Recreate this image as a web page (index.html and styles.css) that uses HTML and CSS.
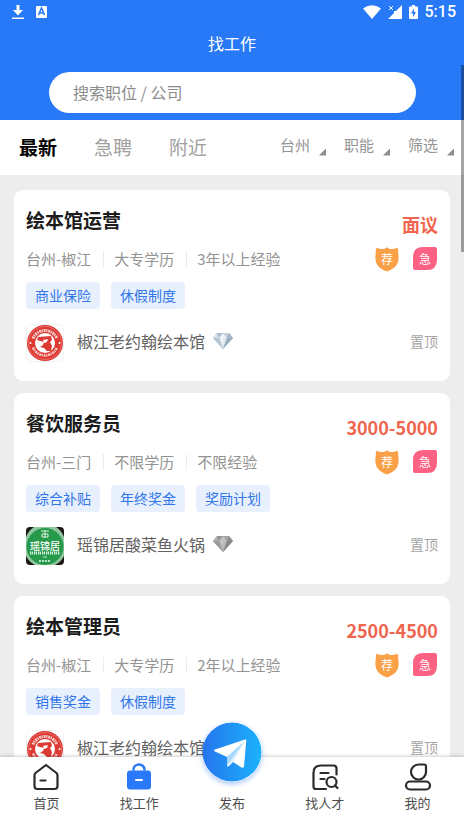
FILE: index.html
```html
<!DOCTYPE html>
<html lang="zh-CN">
<head>
  <meta charset="UTF-8">
  <meta name="viewport" content="width=device-width, initial-scale=1">
  <title>找工作</title>
  <link rel="stylesheet" href="styles.css">
</head>
<body>

<!-- shared icons -->
<svg class="sprite" aria-hidden="true">
  <symbol id="badge-rec" viewBox="0 0 26 26">
    <path d="M13 1c1 1.400 2.500 2 4.500 2 2 0 4-.4 5.500-1.500l1.500 2.500-.5 1c.4 2 .6 4 .6 7 0 7-4.600 11-11.600 13.500C6 23 1.400 19 1.400 12c0-3 .2-5 .6-7l-.5-1L3 1.500C4.500 2.600 6.500 3 8.500 3 10.500 3 12 2.400 13 1z" fill="#faa046"/>
  </symbol>
  <symbol id="badge-urgent" viewBox="0 0 26 26">
    <path d="M11 1h12q2 0 2 2v11q0 10-10 10H3q-2 0-2-2V11Q1 1 11 1z" fill="#fd6184"/>
  </symbol>
  <symbol id="diamond" viewBox="0 0 20 18">
    <path d="M4 1h12l4 5-10 11L0 6z" fill="#b9c8d6"/>
    <path d="M4 1l2 5H0z" fill="#d5dfe8"/>
    <path d="M4 1h6L6 6z" fill="#a9bccd"/>
    <path d="M10 1l4 5H6z" fill="#edf3f8"/>
    <path d="M10 1h6l-2 5z" fill="#c3d0dc"/>
    <path d="M16 1l4 5h-6z" fill="#a3b6c8"/>
    <path d="M0 6h6l4 11z" fill="#b3c3d2"/>
    <path d="M6 6h8l-4 11z" fill="#dce6ef"/>
    <path d="M14 6h6L10 17z" fill="#9aaec2"/>
    <path d="M8 6h2v7z" fill="#fff"/>
  </symbol>
  <symbol id="logo-book" viewBox="0 0 38 38">
    <rect x=".5" y=".5" width="37" height="37" rx="5" fill="#fff" stroke="#f1f1f1"/>
    <circle cx="19" cy="19" r="18" fill="#dd3a33"/>
    <circle cx="19" cy="19" r="16.500" fill="none" stroke="#f08a84" stroke-width=".6"/>
    <circle cx="19" cy="19" r="10" fill="#fff"/>
    <path d="M7 14.500a13 13 0 0 1 24 0" fill="none" stroke="#f8cfcc" stroke-width="3" stroke-dasharray="2 .6 1.200 .8"/>
    <path d="M7 23.500a13 13 0 0 0 24 0" fill="none" stroke="#f8cfcc" stroke-width="2.500" stroke-dasharray="2 .6 1.200 .8"/>
    <path d="M12 13l13-1 1 4-2 2 2 4-1 5h-4l-3-3-4-1 3-2 1-3-4-1-3-1z" fill="#dd3a33"/>
    <path d="M17 16l5-1-1 3-3 1z" fill="#fff"/>
    <circle cx="4.500" cy="19" r="1" fill="#fff"/>
    <circle cx="33.500" cy="19" r="1" fill="#fff"/>
  </symbol>
  <symbol id="logo-yao" viewBox="0 0 38 38">
    <rect width="38" height="38" rx="4" fill="#1c1712"/>
    <path d="M8 0h22a20 20 0 0 1 8 10v19a20 20 0 0 1-9 9H9a20 20 0 0 1-9-9V10a20 20 0 0 1 8-10z" fill="#8fc7a0"/>
    <circle cx="19" cy="19.500" r="18.500" fill="#27994b"/>
    <path d="M15 4h8M16 7h6v3h-6zM19 3v8" stroke="#d9f0df" fill="none"/>
    <path d="M4 26h30" stroke="#d9f0df" stroke-width="3" stroke-dasharray="1 .6 1.400 1"/>
    <path d="M17 30h4" stroke="#bfe3c9"/>
    <path d="M13 34h12" stroke="#bfe3c9" stroke-width="2" stroke-dasharray="2 1"/>
  </symbol>
</svg>

<div class="app">
  <header class="header">
    <div class="status">
      <svg width="12" height="16" viewBox="0 0 12 16" fill="#fff"><path d="M4.500 1h3v5H11l-5 5.500L1 6h3.500zM0 13.500h12V15H0z"/></svg>
      <svg class="status-app" width="11" height="12" viewBox="0 0 11 12"><rect width="11" height="12" rx="1" fill="#fff"/><path d="M2.500 9l3-7 3 7M3.500 7h4" fill="none" stroke="#2779f7" stroke-width="1.500"/></svg>
      <svg width="18" height="14" viewBox="0 0 18 14" fill="#fff"><path d="M0 3.500Q9-3 18 3.500L9 14z"/></svg>
      <svg width="14" height="14" viewBox="0 0 14 14"><path d="M14 0v14H0l6-6V6h2z" fill="#fff"/><path d="M1 1l4 4M5 1L1 5" stroke="#fff"/></svg>
      <svg width="9" height="14" viewBox="0 0 9 14"><path d="M3 0h3v1.500h2q1 0 1 1V13q0 1-1 1H1q-1 0-1-1V2.500q0-1 1-1h2z" fill="#fff"/><path d="M5 3.500L2 8.500h2v3.500l3-5H5z" fill="#2779f7"/></svg>
      <span class="clock">5:15</span>
    </div>
    <h1>找工作</h1>
    <form class="search">
      <input type="search" placeholder="搜索职位 / 公司" aria-label="搜索职位 / 公司">
    </form>
  </header>

  <div class="toolbar">
    <div class="tabs">
      <button type="button" class="tab active">最新</button>
      <button type="button" class="tab">急聘</button>
      <button type="button" class="tab">附近</button>
    </div>
    <div class="filters">
      <button type="button" class="filter">台州</button>
      <button type="button" class="filter">职能</button>
      <button type="button" class="filter">筛选</button>
    </div>
  </div>

  <main class="jobs">
    <article class="card">
      <div class="card-top">
        <h2>绘本馆运营</h2>
        <span class="salary">面议</span>
      </div>
      <div class="card-meta">
        <ul class="meta">
          <li>台州-椒江</li>
          <li>大专学历</li>
          <li>3年以上经验</li>
        </ul>
        <span class="badge"><svg><use href="#badge-rec"/></svg><span>荐</span></span>
        <span class="badge"><svg><use href="#badge-urgent"/></svg><span>急</span></span>
      </div>
      <div class="tags">
        <span class="tag">商业保险</span>
        <span class="tag">休假制度</span>
      </div>
      <div class="company">
        <span class="logo"><svg><use href="#logo-book"/></svg></span>
        <span>椒江老约翰绘本馆</span>
        <svg class="gem"><use href="#diamond"/></svg>
        <span class="pin">置顶</span>
      </div>
    </article>

    <article class="card">
      <div class="card-top">
        <h2>餐饮服务员</h2>
        <span class="salary">3000-5000</span>
      </div>
      <div class="card-meta">
        <ul class="meta">
          <li>台州-三门</li>
          <li>不限学历</li>
          <li>不限经验</li>
        </ul>
        <span class="badge"><svg><use href="#badge-rec"/></svg><span>荐</span></span>
        <span class="badge"><svg><use href="#badge-urgent"/></svg><span>急</span></span>
      </div>
      <div class="tags">
        <span class="tag">综合补贴</span>
        <span class="tag">年终奖金</span>
        <span class="tag">奖励计划</span>
      </div>
      <div class="company">
        <span class="logo"><svg><use href="#logo-yao"/></svg><span>瑶锦居</span></span>
        <span>瑶锦居酸菜鱼火锅</span>
        <svg class="gem gray"><use href="#diamond"/></svg>
        <span class="pin">置顶</span>
      </div>
    </article>

    <article class="card">
      <div class="card-top">
        <h2>绘本管理员</h2>
        <span class="salary">2500-4500</span>
      </div>
      <div class="card-meta">
        <ul class="meta">
          <li>台州-椒江</li>
          <li>大专学历</li>
          <li>2年以上经验</li>
        </ul>
        <span class="badge"><svg><use href="#badge-rec"/></svg><span>荐</span></span>
        <span class="badge"><svg><use href="#badge-urgent"/></svg><span>急</span></span>
      </div>
      <div class="tags">
        <span class="tag">销售奖金</span>
        <span class="tag">休假制度</span>
      </div>
      <div class="company">
        <span class="logo"><svg><use href="#logo-book"/></svg></span>
        <span>椒江老约翰绘本馆</span>
        <svg class="gem"><use href="#diamond"/></svg>
        <span class="pin">置顶</span>
      </div>
    </article>
  </main>

  <nav class="navbar">
    <a href="#home">
      <svg width="28" height="28" viewBox="0 0 28 28" fill="none" stroke="#2a2a2e" stroke-width="2.200" stroke-linejoin="round" stroke-linecap="round"><path d="M14 2L3.500 10Q2.500 11 2.500 12.500V23q0 3 3 3h17q3 0 3-3V12.500q0-1.500-1-2.500z"/><path d="M8.500 17.500h5"/></svg>
      首页
    </a>
    <a href="#jobs">
      <svg width="28" height="28" viewBox="0 0 28 28"><path d="M8.500 6.500a5.500 5 0 0 1 11 0" fill="none" stroke="#2979f8" stroke-width="2.500" stroke-linecap="round"/><rect x="2" y="7.500" width="24" height="19" rx="3" fill="#2979f8"/><path d="M11 17h6" stroke="#fff" stroke-width="2" stroke-linecap="round"/></svg>
      找工作
    </a>
    <a href="#post">
      <svg class="post" viewBox="0 0 60 60">
        <defs><linearGradient id="sky" x1="0" y1="0" x2="1" y2="0"><stop offset="0" stop-color="#2575ee"/><stop offset="1" stop-color="#1cb2fc"/></linearGradient></defs>
        <circle cx="30" cy="30" r="29.500" fill="url(#sky)"/>
        <path d="M43 17.500Q44.500 17 44.300 18.500L42 44.500Q41.500 46.500 39.500 45.500L31 40l-4 4q-2 1.500-2-1V35l-12-5.500q-2-1 0-2z" fill="#fff"/>
        <path d="M43 19L25 34.500v9.500l4.500-6.500z" fill="#a6d8fb"/>
        <path d="M43 19L29.500 38l-4.500 6 6-4z" fill="#d9effd"/>
      </svg>
      发布
    </a>
    <a href="#talent">
      <svg width="28" height="28" viewBox="0 0 28 28" fill="none" stroke="#2a2a2e" stroke-width="2.200" stroke-linecap="round" stroke-linejoin="round"><path d="M15 26H5q-2.500 0-2.500-2.500V10Q2.500 2.500 10 2.500h12.500q3 0 3 3v6"/><path d="M9.500 10h8M9.500 16h4"/><circle cx="20.500" cy="19" r="5"/><path d="M24 22.500l2.500 2.500"/></svg>
      找人才
    </a>
    <a href="#me">
      <svg width="28" height="28" viewBox="0 0 28 28" fill="none" stroke="#2a2a2e" stroke-width="2.200" stroke-linejoin="round"><path d="M14.500 1.500H20q2 0 2 2V9a7.500 7.500 0 1 1-7.500-7.500z"/><rect x="2" y="18.500" width="24" height="8" rx="4"/></svg>
      我的
    </a>
  </nav>

  <div class="scroll-thumb"></div>
</div>

</body>
</html>
```

FILE: styles.css
```css
* {
  box-sizing: border-box;
}

body {
  margin: 0;
  font-family: "Noto Sans CJK SC", sans-serif;
  background: #ededed;
  color: #939393;
}

h1,
h2,
ul {
  margin: 0;
  padding: 0;
}

button,
input {
  font-family: inherit;
  border: none;
  background: none;
  padding: 0;
}

svg {
  display: block;
  flex-shrink: 0;
}

.sprite {
  position: absolute;
  width: 0;
  height: 0;
}

.app {
  display: flex;
  flex-direction: column;
  height: 100vh;
  overflow: hidden;
}

/* header */
.header {
  flex-shrink: 0;
  background: #2779f7;
  color: #fff;
  padding-bottom: 7px;
}

.status {
  display: flex;
  align-items: center;
  gap: 7px;
  height: 24px;
  padding: 0 8px 0 12px;
}

.status-app {
  margin-left: 5px;
  margin-right: auto;
}

.clock {
  font: 500 16px/24px Roboto, sans-serif;
}

h1 {
  font-size: 16px;
  font-weight: 400;
  line-height: 38px;
  text-align: center;
}

.search {
  margin: 10px 48px 0 49px;
}

.search input {
  display: block;
  width: 100%;
  height: 41px;
  padding: 0 24px 2px;
  border-radius: 21px;
  background: #fff;
  font-size: 16px;
}

.search input::placeholder {
  color: #8c8c8c;
}

/* tabs and filters */
.toolbar {
  display: flex;
  flex-shrink: 0;
  justify-content: space-between;
  height: 55px;
  padding: 0 10px 2px 19px;
  background: #fff;
}

.tabs {
  display: flex;
  gap: 37px;
}

.tab {
  color: #a0a0a0;
  font-size: 19px;
}

.tab.active {
  color: #000;
  font-weight: 700;
}

.filters {
  display: flex;
  align-items: center;
  gap: 18px;
  padding-bottom: 4px;
}

.filter {
  display: flex;
  align-items: flex-end;
  gap: 9px;
  color: #939393;
  font-size: 15px;
  line-height: 22px;
}

.filter::after {
  content: "";
  width: 7px;
  height: 7px;
  background: #8c8c8c;
  clip-path: polygon(100% 0, 100% 100%, 0 100%);
}

/* job cards */
.jobs {
  display: flex;
  flex: 1;
  flex-direction: column;
  gap: 12px;
  min-height: 0;
  padding: 15px 14px 0;
  overflow: hidden;
}

.card {
  flex-shrink: 0;
  padding: 14px 12px 19px;
  border-radius: 9px;
  background: #fff;
}

.card-top {
  display: flex;
  align-items: flex-start;
  justify-content: space-between;
  height: 34px;
}

h2 {
  color: #1c1c1c;
  font-size: 19px;
  line-height: 32px;
}

.salary {
  align-self: flex-end;
  color: #f0654e;
  font-size: 18px;
  font-weight: 700;
  line-height: 28px;
}

.card-meta {
  display: flex;
  align-items: center;
  gap: 12px;
  height: 28px;
  margin-top: 7px;
}

.meta {
  display: flex;
  flex: 1;
  list-style: none;
  font-size: 15px;
  line-height: 16px;
}

.meta li + li {
  margin-left: 12px;
  padding-left: 10px;
  border-left: 1px solid #ececec;
}

/* shape and its character share one grid cell */
.badge,
.logo {
  display: grid;
  place-items: center;
}

.badge > *,
.logo > * {
  grid-area: 1 / 1;
}

.badge svg {
  width: 26px;
  height: 26px;
}

.badge span {
  color: #fff;
  font-size: 12px;
  line-height: 26px;
}

.tags {
  display: flex;
  gap: 11px;
  margin-top: 9px;
}

.tag {
  padding: 0 9px;
  border-radius: 4px;
  background: #e8f0fe;
  color: #3076e8;
  font-size: 14px;
  line-height: 27px;
}

.company {
  display: flex;
  align-items: flex-start;
  margin-top: 15px;
  color: #626262;
  font-size: 16px;
  line-height: 34px;
}

.logo {
  margin-right: 13px;
}

.logo svg {
  width: 38px;
  height: 38px;
}

.logo span {
  color: #fff;
  font-size: 10px;
  font-weight: 500;
  line-height: 38px;
}

.gem {
  width: 20px;
  height: 18px;
  margin: 8px 0 0 8px;
}

.gem.gray {
  filter: grayscale(1) brightness(0.8);
}

.pin {
  margin-left: auto;
  color: #a6a6a6;
  font-size: 14px;
}

/* bottom bar */
.navbar {
  position: relative;
  display: flex;
  flex-shrink: 0;
  height: 67px;
  background: #fff;
  box-shadow: 0 -1px 3px rgba(0, 0, 0, 0.2);
}

.navbar a {
  display: flex;
  flex: 1;
  flex-direction: column;
  align-items: center;
  justify-content: flex-end;
  gap: 2px;
  padding-bottom: 11px;
  color: #4d4d4d;
  font-size: 13px;
  line-height: 20px;
  text-decoration: none;
}

.post {
  width: 60px;
  height: 60px;
  margin-bottom: 9px;
  border-radius: 50%;
  box-shadow: 0 2px 5px rgba(37, 117, 238, 0.4);
}

/* lies over the whole page */
.scroll-thumb {
  position: fixed;
  top: 65px;
  right: 0;
  width: 3px;
  height: 187px;
  background: rgba(0, 0, 0, 0.35);
}
```
